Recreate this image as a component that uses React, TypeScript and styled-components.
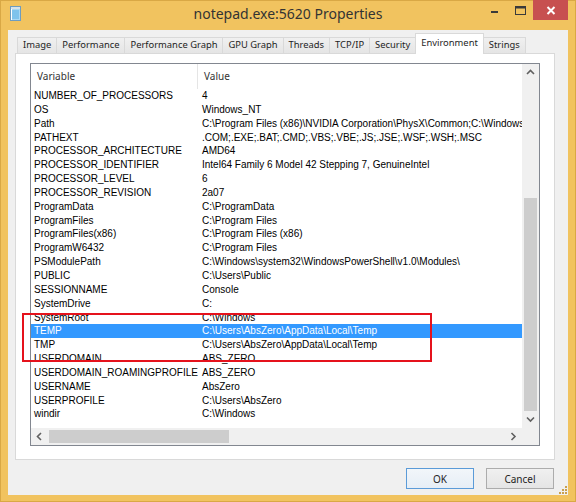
import React from 'react'
import styled, { createGlobalStyle } from 'styled-components'

const GlobalStyle = createGlobalStyle`
    html, body {
        margin: 0;
        padding: 0;
        background: #fff;
    }
    body {
        font-family: "Liberation Sans", Arial, sans-serif;
    }
`

const Window = styled.div`
    position: relative;
    width: 576px;
    height: 502px;
    box-sizing: border-box;
    background-color: #f1c35f;
    box-shadow: inset 0 0 0 1px #d9a845;
    display: flex;
    flex-direction: column;
    overflow: hidden;
`

const TitleBar = styled.div`
    height: 30px;
    flex-shrink: 0;
    display: grid;
    grid-template-columns: 1fr auto 1fr;
    align-items: start;
`

const AppIcon = styled.div`
    padding: 6px 0 0 10px;
    display: flex;
`

const Title = styled.div`
    font-family: "Noto Sans", sans-serif;
    font-size: 14px;
    line-height: 28px;
    color: #333;
    white-space: nowrap;
`

const Caption = styled.div`
    justify-self: end;
    display: flex;
    padding-right: 8px;
`

const CaptionButton = styled.div<{ $close?: boolean }>`
    width: ${p => (p.$close ? 35 : 26)}px;
    height: 20px;
    display: flex;
    align-items: center;
    justify-content: center;
    background-color: ${p => (p.$close ? '#c75050' : 'transparent')};
`

const Client = styled.div`
    flex: 1;
    min-height: 0;
    margin: 0 8px 7px 8px;
    padding: 3px 13px 0 7px;
    background-color: #f0f0f0;
    display: flex;
    flex-direction: column;
`

const TabStrip = styled.div`
    height: 20px;
    flex-shrink: 0;
    display: flex;
    align-items: flex-start;
    padding-left: 2px;
`

const Tab = styled.div<{ $active?: boolean }>`
    position: relative;
    z-index: ${p => (p.$active ? 1 : 0)};
    box-sizing: border-box;
    height: ${p => (p.$active ? 21 : 16)}px;
    margin-top: ${p => (p.$active ? 0 : 4)}px;
    margin-left: -1px;
    padding: 0 5px;
    border: 1px solid #d9d9d9;
    border-bottom: none;
    background: ${p => (p.$active ? '#fff' : 'linear-gradient(#f0f0f0, #e5e5e5)')};
    font-family: "Noto Sans", sans-serif;
    font-size: 9.4px;
    line-height: ${p => (p.$active ? 17 : 14)}px;
    color: #1e1e1e;
    white-space: nowrap;

    &:first-child {
        margin-left: 0;
    }
`

const Panel = styled.div`
    flex: 1;
    min-height: 0;
    border: 1px solid #d9d9d9;
    background-color: #fff;
    padding: 9px 14px 13px 14px;
    display: flex;
    flex-direction: column;
`

const List = styled.div`
    flex: 1;
    min-height: 0;
    border: 1px solid #828790;
    display: grid;
    grid-template-columns: 1fr 17px;
    grid-template-rows: 1fr 17px;
    background-color: #fff;
`

const Content = styled.div`
    overflow: hidden;
    display: flex;
    flex-direction: column;
`

const Header = styled.div`
    height: 25px;
    flex-shrink: 0;
    display: grid;
    grid-template-columns: 167px 1fr;
    font-family: "Noto Sans", sans-serif;
    font-size: 10px;
    line-height: 24px;
    color: #333;
`

const HeaderCell = styled.div`
    padding-left: 6px;
    &:first-child {
        border-right: 1px solid #e5e5e5;
    }
`

const Row = styled.div<{ $selected?: boolean }>`
    height: 13.85px;
    flex-shrink: 0;
    display: grid;
    grid-template-columns: 167px 1fr;
    font-size: 10px;
    line-height: 13.85px;
    color: ${p => (p.$selected ? '#fff' : '#000')};
    background-color: ${p => (p.$selected ? '#3399ff' : 'transparent')};
`

const Cell = styled.div<{ $value?: boolean }>`
    padding-left: ${p => (p.$value ? 4 : 3)}px;
    white-space: nowrap;
    overflow: hidden;
`

const VScroll = styled.div`
    grid-row: 1;
    grid-column: 2;
    display: flex;
    flex-direction: column;
    background-color: #f0f0f0;
`

const HScroll = styled.div`
    grid-row: 2;
    grid-column: 1;
    display: flex;
    background-color: #f0f0f0;
`

const Corner = styled.div`
    grid-row: 2;
    grid-column: 2;
    background-color: #f0f0f0;
`

const ArrowButton = styled.div`
    width: 17px;
    height: 17px;
    flex-shrink: 0;
    display: flex;
    align-items: center;
    justify-content: center;
`

const VTrack = styled.div`
    flex: 1;
    min-height: 0;
    display: flex;
    flex-direction: column;
    justify-content: flex-end;
    padding: 0 2px;
`

const HTrack = styled.div`
    flex: 1;
    display: flex;
    padding: 2px 0 2px 1px;
`

const Thumb = styled.div`
    background-color: #cdcdcd;
    flex-shrink: 0;
`

const ButtonRow = styled.div`
    height: 35px;
    flex-shrink: 0;
    box-sizing: border-box;
    display: flex;
    justify-content: flex-end;
    align-items: flex-start;
    gap: 12px;
    padding: 8px 1px 0 0;
`

const DialogButton = styled.div<{ $default?: boolean }>`
    width: 68px;
    height: 21px;
    box-sizing: border-box;
    border: 1px solid ${p => (p.$default ? '#5b9bd8' : '#acacac')};
    background: ${p => (p.$default ? 'linear-gradient(#f2f6fa, #e6eef6)' : 'linear-gradient(#f0f0f0, #e5e5e5)')};
    display: flex;
    align-items: center;
    justify-content: center;
    font-family: "Noto Sans", sans-serif;
    font-size: 10px;
    color: #1e1e1e;
`

const Annotation = styled.div`
    position: absolute;
    left: 22px;
    top: 313px;
    width: 410px;
    height: 49px;
    box-sizing: border-box;
    border: 2px solid #e5121c;
    pointer-events: none;
`

const Grip = styled.div`
    position: absolute;
    right: 9px;
    bottom: 8px;
    display: flex;
`

const tabs = ['Image', 'Performance', 'Performance Graph', 'GPU Graph', 'Threads', 'TCP/IP', 'Security', 'Environment', 'Strings']

const rows: [string, string][] = [
    ['NUMBER_OF_PROCESSORS', '4'],
    ['OS', 'Windows_NT'],
    ['Path', 'C:\\Program Files (x86)\\NVIDIA Corporation\\PhysX\\Common;C:\\Windows\\system32;C:\\Windows'],
    ['PATHEXT', '.COM;.EXE;.BAT;.CMD;.VBS;.VBE;.JS;.JSE;.WSF;.WSH;.MSC'],
    ['PROCESSOR_ARCHITECTURE', 'AMD64'],
    ['PROCESSOR_IDENTIFIER', 'Intel64 Family 6 Model 42 Stepping 7, GenuineIntel'],
    ['PROCESSOR_LEVEL', '6'],
    ['PROCESSOR_REVISION', '2a07'],
    ['ProgramData', 'C:\\ProgramData'],
    ['ProgramFiles', 'C:\\Program Files'],
    ['ProgramFiles(x86)', 'C:\\Program Files (x86)'],
    ['ProgramW6432', 'C:\\Program Files'],
    ['PSModulePath', 'C:\\Windows\\system32\\WindowsPowerShell\\v1.0\\Modules\\'],
    ['PUBLIC', 'C:\\Users\\Public'],
    ['SESSIONNAME', 'Console'],
    ['SystemDrive', 'C:'],
    ['SystemRoot', 'C:\\Windows'],
    ['TEMP', 'C:\\Users\\AbsZero\\AppData\\Local\\Temp'],
    ['TMP', 'C:\\Users\\AbsZero\\AppData\\Local\\Temp'],
    ['USERDOMAIN', 'ABS_ZERO'],
    ['USERDOMAIN_ROAMINGPROFILE', 'ABS_ZERO'],
    ['USERNAME', 'AbsZero'],
    ['USERPROFILE', 'C:\\Users\\AbsZero'],
    ['windir', 'C:\\Windows'],
]

// vertical: visible part of the list, scrolled to the bottom
const vRatio = 0.645
const hRatio = 0.395

const Chevron = ({ dir }: { dir: 'up' | 'down' | 'left' | 'right' }) => {
    const pts = {
        up: '1,5 4.5,1.5 8,5',
        down: '1,1.5 4.5,5 8,1.5',
        left: '5,1 1.5,4.5 5,8',
        right: '1.5,1 5,4.5 1.5,8',
    }[dir]
    const vertical = dir === 'up' || dir === 'down'
    return (
        <svg width={vertical ? 9 : 7} height={vertical ? 7 : 9}>
            <polyline points={pts} fill="none" stroke="#606060" strokeWidth="1.6" />
        </svg>
    )
}

const App = () => {
    return (
        <>
            <GlobalStyle />
            <Window>
                <TitleBar>
                    <AppIcon>
                        <svg width="11" height="15" viewBox="0 0 11 15">
                            <rect x="0.5" y="0.5" width="10" height="14" fill="#a9d8f3" stroke="#6d9cc0" />
                            <rect x="1" y="1" width="9" height="2" fill="#d7e3ea" />
                            <rect x="2" y="4" width="7" height="9" fill="#7fc3ec" />
                            <line x1="1.5" y1="3" x2="1.5" y2="14" stroke="#ffffff" />
                        </svg>
                    </AppIcon>
                    <Title>notepad.exe:5620 Properties</Title>
                    <Caption>
                        <CaptionButton>
                            <svg width="9" height="9">
                                <rect x="1" y="5" width="7" height="2" fill="#3a3a3a" />
                            </svg>
                        </CaptionButton>
                        <CaptionButton>
                            <svg width="11" height="9">
                                <rect x="0.5" y="0.5" width="10" height="8" fill="none" stroke="#3a3a3a" />
                                <rect x="0.5" y="0.5" width="10" height="2" fill="#3a3a3a" />
                            </svg>
                        </CaptionButton>
                        <CaptionButton $close>
                            <svg width="10" height="9">
                                <path d="M1.5 1 L8.5 8 M8.5 1 L1.5 8" stroke="#fff" strokeWidth="2" />
                            </svg>
                        </CaptionButton>
                    </Caption>
                </TitleBar>

                <Client>
                    <TabStrip>
                        {tabs.map(t => (
                            <Tab key={t} $active={t === 'Environment'}>{t}</Tab>
                        ))}
                    </TabStrip>
                    <Panel>
                        <List>
                            <Content>
                                <Header>
                                    <HeaderCell>Variable</HeaderCell>
                                    <HeaderCell>Value</HeaderCell>
                                </Header>
                                {rows.map(([name, value]) => (
                                    <Row key={name} $selected={name === 'TEMP'}>
                                        <Cell>{name}</Cell>
                                        <Cell $value>{value}</Cell>
                                    </Row>
                                ))}
                            </Content>
                            <VScroll>
                                <ArrowButton><Chevron dir="up" /></ArrowButton>
                                <VTrack>
                                    <Thumb style={{ height: `${vRatio * 100}%` }} />
                                </VTrack>
                                <ArrowButton><Chevron dir="down" /></ArrowButton>
                            </VScroll>
                            <HScroll>
                                <ArrowButton><Chevron dir="left" /></ArrowButton>
                                <HTrack>
                                    <Thumb style={{ width: `${hRatio * 100}%` }} />
                                </HTrack>
                                <ArrowButton><Chevron dir="right" /></ArrowButton>
                            </HScroll>
                            <Corner />
                        </List>
                    </Panel>
                    <ButtonRow>
                        <DialogButton $default>OK</DialogButton>
                        <DialogButton>Cancel</DialogButton>
                    </ButtonRow>
                </Client>

                <Annotation />
                <Grip>
                    <svg width="10" height="10">
                        {[[8, 2], [8, 5], [5, 5], [8, 8], [5, 8], [2, 8]].map(([x, y]) => (
                            <rect key={`${x}-${y}`} x={x} y={y} width="2" height="2" fill="#c9a04e" />
                        ))}
                    </svg>
                </Grip>
            </Window>
        </>
    )
}

export default App
